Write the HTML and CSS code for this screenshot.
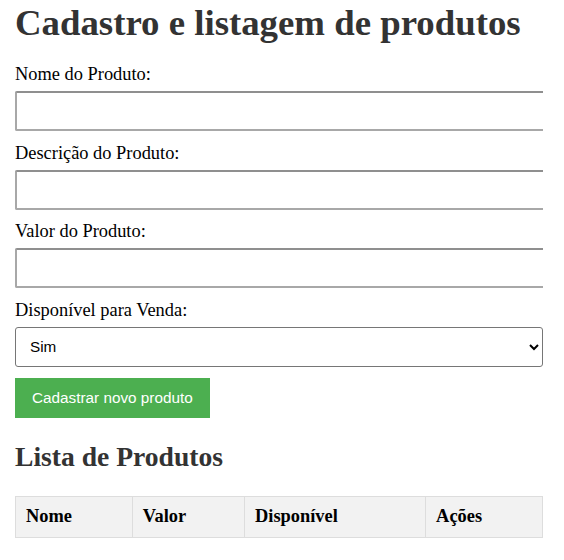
FILE: index.html
```html
<!DOCTYPE html>
<html lang="pt-BR">
<head>
<meta charset="utf-8">
<title>Cadastro e listagem de produtos</title>
<link rel="stylesheet" href="styles.css">
</head>
<body>
<h1 class="title">Cadastro e listagem de produtos</h1>
<form class="product-form">
  <label class="field-label" for="nome">Nome do Produto:</label>
  <input class="field-input" type="text" id="nome">
  <label class="field-label" for="descricao">Descrição do Produto:</label>
  <input class="field-input" type="text" id="descricao">
  <label class="field-label" for="valor">Valor do Produto:</label>
  <input class="field-input" type="text" id="valor">
  <label class="field-label" for="disponivel">Disponível para Venda:</label>
  <select class="field-select" id="disponivel">
    <option>Sim</option>
    <option>Não</option>
  </select>
  <button class="submit-btn" type="button">Cadastrar novo produto</button>
</form>
<h2 class="subtitle">Lista de Produtos</h2>
<table class="product-table">
  <thead>
    <tr>
      <th>Nome</th>
      <th>Valor</th>
      <th>Disponível</th>
      <th>Ações</th>
    </tr>
  </thead>
  <tbody></tbody>
</table>
</body>
</html>
```
FILE: styles.css
```css
html {
  overflow-x: hidden;
}

body {
  margin: 0 21px 0 15px;
  font-family: "Liberation Serif", "Times New Roman", serif;
  font-size: 18.4px;
  color: #000;
  background: #fff;
}

.title {
  margin: 0 0 20px;
  padding-top: 2px;
  font-size: 36.8px;
  line-height: 42px;
  font-weight: bold;
  color: #333;
}

.product-form {
  margin: 0;
}

.field-label {
  display: block;
  margin-bottom: 6px;
}

.field-input {
  display: block;
  box-sizing: content-box;
  width: 100%;
  height: 16px;
  padding: 10px;
  margin: 0 0 11.5px;
  border: 2px solid #a8a8a8;
  border-top-color: #8f8f8f;
  border-radius: 2px;
  font-family: "Liberation Sans", Arial, sans-serif;
  font-size: 15.3px;
}

.field-select {
  display: block;
  width: 100%;
  height: 40px;
  padding: 0 10px;
  margin: 0 0 11px;
  font-family: "Liberation Sans", Arial, sans-serif;
  font-size: 15.3px;
  color: #000;
  background: #fff;
  border: 1px solid #767676;
  border-radius: 3px;
}

.submit-btn {
  display: block;
  height: 40px;
  padding: 0 17px;
  margin: 0;
  border: none;
  background: #4caf50;
  color: #fff;
  font-family: "Liberation Sans", Arial, sans-serif;
  font-size: 15.3px;
  cursor: pointer;
}

.subtitle {
  margin: 23px 0 23px;
  font-size: 27.6px;
  font-weight: bold;
  color: #333;
}

.product-table {
  width: 100%;
  border-collapse: collapse;
}

.product-table th {
  padding: 9.5px 10px;
  border: 1px solid #ddd;
  background: #f2f2f2;
  text-align: left;
  font-weight: bold;
}
```
